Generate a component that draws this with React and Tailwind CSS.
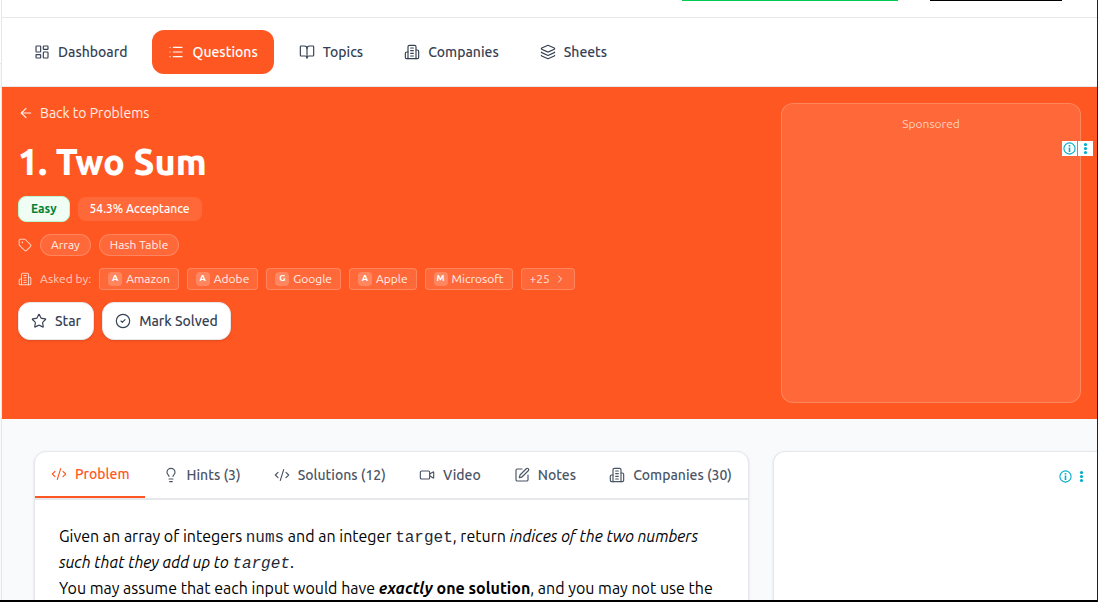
import { LayoutDashboard, List, BookOpen, Layers, ArrowLeft, Tag, ChevronRight, Star, CircleCheck, CodeXml, Lightbulb, Video, SquarePen } from "lucide-react";

function Building({ className, strokeWidth = 2 }) {
  return (
    <svg className={className} viewBox="0 0 24 24" fill="none" stroke="currentColor" strokeWidth={strokeWidth} strokeLinecap="round" strokeLinejoin="round" aria-hidden="true">
      <path d="M6 22V4a2 2 0 0 1 2-2h8a2 2 0 0 1 2 2v18Z" />
      <path d="M6 12H4a2 2 0 0 0-2 2v6a2 2 0 0 0 2 2h2" />
      <path d="M18 9h2a2 2 0 0 1 2 2v9a2 2 0 0 1-2 2h-2" />
      <path d="M10 6h4M10 10h4M10 14h4M10 18h4" />
    </svg>
  );
}

const navItems = [
  { label: "Dashboard", Icon: LayoutDashboard },
  { label: "Questions", Icon: List, active: true },
  { label: "Topics", Icon: BookOpen },
  { label: "Companies", Icon: Building },
  { label: "Sheets", Icon: Layers },
];

const companies = ["Amazon", "Adobe", "Google", "Apple", "Microsoft"];

const tabs = [
  { label: "Problem", Icon: CodeXml, active: true },
  { label: "Hints (3)", Icon: Lightbulb },
  { label: "Solutions (12)", Icon: CodeXml },
  { label: "Video", Icon: Video },
  { label: "Notes", Icon: SquarePen },
  { label: "Companies (30)", Icon: Building },
];

function AdControls({ className }) {
  return (
    <div className={"flex gap-px " + className}>
      <button type="button" aria-label="Ad information" className="size-[15px] bg-white">
        <svg viewBox="0 0 15 15" className="size-[15px]" aria-hidden="true">
          <circle cx="7.5" cy="7.5" r="5.6" fill="none" stroke="#00aecd" strokeWidth="1.1" />
          <path d="M6.7 4h1.6v1.4H6.7zM6.7 6.4h1.6v4.7H6.7z" fill="#00aecd" />
        </svg>
      </button>
      <button type="button" aria-label="Ad options" className="size-[15px] bg-white">
        <svg viewBox="0 0 15 15" className="size-[15px]" fill="#00aecd" aria-hidden="true">
          <circle cx="7.5" cy="3.5" r="1.6" />
          <circle cx="7.5" cy="7.5" r="1.6" />
          <circle cx="7.5" cy="11.5" r="1.6" />
        </svg>
      </button>
    </div>
  );
}

function Code({ children }) {
  return <code className="font-mono text-[16px] leading-5 text-gray-800">{children}</code>;
}

export default function App() {
  return (
    <div className="flex h-screen overflow-hidden border-r border-b-2 border-r-[#222] border-b-black bg-white font-['Ubuntu','Noto_Sans',sans-serif] text-[13px] text-black">
      <div className="flex w-[2px] shrink-0 flex-col border-r border-gray-200">
        <div className="h-16 border-b border-gray-200" />
        <div className="grow bg-gray-50" />
      </div>
      <div className="min-w-0 grow overflow-hidden bg-gray-50">
        <header className="flex h-[18px] items-start justify-end gap-8 border-b border-gray-200 bg-white pr-[35px]">
          <div className="h-px w-[216px] bg-[#00c950]" />
          <div className="h-px w-[132px] bg-black" />
        </header>

        <nav className="flex h-[69px] items-center gap-[9px] border-b border-gray-200 bg-white px-4">
          {navItems.map(({ label, Icon, active }) => (
            <a
              key={label}
              href="#"
              className={
                "flex h-11 items-center gap-2 rounded-xl px-4 text-[14px] font-medium " +
                (active ? "bg-[#ff5722] text-white" : "text-gray-700")
              }
            >
              <Icon className="size-4 shrink-0" strokeWidth={1.75} />
              {label}
            </a>
          ))}
        </nav>

        <section className="flex items-start justify-between bg-[#ff5722] p-4 text-white">
          <div className="flex flex-col items-start">
            <a href="#" className="flex h-5 items-center gap-1.5 text-[14px] text-white/90">
              <ArrowLeft className="size-4" strokeWidth={1.75} />
              Back to Problems
            </a>
            <h1 className="mt-[19px] text-[36px] leading-10 font-extrabold">1. Two Sum</h1>
            <div className="mt-3.5 flex items-center gap-2">
              <span className="flex h-[26px] items-center rounded-lg border border-green-200 bg-green-50 px-3 text-[12px] font-bold text-green-700">Easy</span>
              <span className="flex h-6 items-center rounded-lg bg-white/10 px-3 text-[12px] font-medium">54.3% Acceptance</span>
            </div>
            <div className="mt-3 flex items-center gap-2 text-[12px]">
              <Tag className="size-3.5 text-white/70" strokeWidth={1.75} />
              <span className="flex h-[22px] items-center rounded-full border border-white/20 bg-white/10 px-2.5 text-white/90">Array</span>
              <span className="flex h-[22px] items-center rounded-full border border-white/20 bg-white/10 px-2.5 text-white/90">Hash Table</span>
            </div>
            <div className="mt-3 flex items-center gap-2 text-[12px] text-white/90">
              <Building className="size-3.5 text-white/70" strokeWidth={1.75} />
              <span className="text-white/70">Asked by:</span>
              {companies.map((name) => (
                <a key={name} href="#" className="flex h-[22px] items-center gap-1 rounded-sm border border-white/20 bg-white/10 px-2">
                  <span className="flex size-3.5 items-center justify-center rounded-sm bg-white/20 text-[9px] font-bold text-white">{name[0]}</span>
                  {name}
                </a>
              ))}
              <button type="button" className="flex h-[22px] items-center gap-1 rounded-sm border border-white/20 bg-white/10 px-2 text-white/80">
                +25
                <ChevronRight className="size-3" />
              </button>
            </div>
            <div className="mt-3 flex gap-2 text-[14px] font-medium text-gray-700">
              <button type="button" className="flex h-[38px] items-center gap-2 rounded-xl border border-gray-200 bg-white px-3 shadow-sm">
                <Star className="size-4" strokeWidth={1.75} />
                Star
              </button>
              <button type="button" className="flex h-[38px] items-center gap-2 rounded-xl border border-gray-200 bg-white px-3 shadow-sm">
                <CircleCheck className="size-4" strokeWidth={1.75} />
                Mark Solved
              </button>
            </div>
          </div>
          <aside className="relative h-[300px] w-[300px] shrink-0 rounded-xl border border-white/20 bg-white/10 pt-3 text-center text-[12px] leading-4 text-white/70">
            Sponsored
            <AdControls className="absolute top-[37px] -right-[13px]" />
          </aside>
        </section>

        <main className="flex gap-6 pt-8 pl-8">
          <article className="h-[400px] min-w-0 grow overflow-hidden rounded-xl border border-gray-200 bg-white shadow-sm">
            <div role="tablist" className="flex h-12 justify-between border-b-2 border-gray-200">
              {tabs.map(({ label, Icon, active }) => (
                <button
                  key={label}
                  type="button"
                  role="tab"
                  aria-selected={!!active}
                  className={
                    "flex items-center gap-2 px-4 text-[14px] font-medium whitespace-nowrap " +
                    (active ? "border-b-2 border-[#ff5722] text-[#ff5722]" : "text-gray-600")
                  }
                >
                  <Icon className="size-4 shrink-0" strokeWidth={1.75} />
                  {label}
                </button>
              ))}
            </div>
            <div className="px-6 pt-[23px] text-[16px] leading-[26px]">
              <p>
                Given an array of integers <Code>nums</Code> and an integer <Code>target</Code>, return{" "}
                <em>
                  indices of the two numbers such that they add up to <Code>target</Code>
                </em>.
              </p>
              <p>
                You may assume that each input would have <strong><em>exactly</em> one solution</strong>, and you may not use the
              </p>
            </div>
          </article>
          <aside className="relative h-[400px] w-[324px] shrink-0 rounded-l-xl border border-r-0 border-gray-200 bg-white shadow-sm">
            <AdControls className="absolute top-[17px] right-2" />
          </aside>
        </main>
      </div>
    </div>
  );
}
